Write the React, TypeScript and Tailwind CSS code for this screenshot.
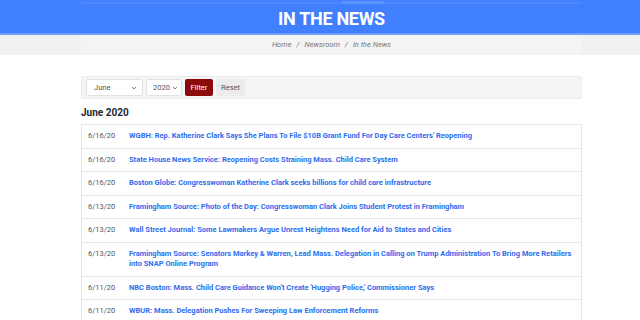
import React from 'react';

const news = [
  { date: '6/16/20', title: "WGBH: Rep. Katherine Clark Says She Plans To File $10B Grant Fund For Day Care Centers' Reopening" },
  { date: '6/16/20', title: 'State House News Service: Reopening Costs Straining Mass. Child Care System' },
  { date: '6/16/20', title: 'Boston Globe: Congresswoman Katherine Clark seeks billions for child care infrastructure' },
  { date: '6/13/20', title: 'Framingham Source: Photo of the Day: Congresswoman Clark Joins Student Protest in Framingham' },
  { date: '6/13/20', title: 'Wall Street Journal: Some Lawmakers Argue Unrest Heightens Need for Aid to States and Cities' },
  { date: '6/13/20', title: 'Framingham Source: Senators Markey & Warren, Lead Mass. Delegation in Calling on Trump Administration To Bring More Retailers into SNAP Online Program' },
  { date: '6/11/20', title: "NBC Boston: Mass. Child Care Guidance Won't Create 'Hugging Police,' Commissioner Says" },
  { date: '6/11/20', title: 'WBUR: Mass. Delegation Pushes For Sweeping Law Enforcement Reforms' },
];

const Chevron = () => (
  <svg width="6" height="6" viewBox="0 0 10 10" className="text-[#666]">
    <path d="M2 3.5 L5 6.5 L8 3.5" fill="none" stroke="currentColor" strokeWidth="1.6" />
  </svg>
);

const App = () => {
  return (
    <div className="w-[640px] h-[320px] overflow-hidden bg-white font-['Roboto',sans-serif]">
      {/* Banner */}
      <header className="bg-[#4080ff] border-b-2 border-[#6d9dff]">
        <div className="w-[501px] ml-[81px] h-[33px] relative">
          <div className="absolute top-[2px] left-0 right-0 h-[2px] bg-[#4d88ff]" />
          <div className="absolute top-[1px] left-[261px] w-[42px] h-[3px] bg-[#5e93ff]" />
          <h1 className="pt-[9px] text-center text-white font-bold text-[18px] leading-[20px] tracking-[-0.3px]">
            IN THE NEWS
          </h1>
        </div>
      </header>

      {/* Breadcrumb */}
      <div className="bg-[#f1f1f1]">
        <div className="w-[501px] ml-[81px] h-[20px] bg-[#f4f4f4] flex items-center justify-center text-[7.5px] italic text-[#777] gap-[5px]">
          <span>Home</span>
          <span>/</span>
          <span>Newsroom</span>
          <span>/</span>
          <span>In the News</span>
        </div>
      </div>

      <main className="w-[501px] ml-[81px] pt-[21px]">
        {/* Filter */}
        <div className="h-[23px] bg-[#f5f5f5] border border-[#ebebeb] rounded-[2px] flex items-center pl-[4px] gap-[3px]">
          <div className="w-[57px] h-[17px] bg-white border border-[#e2e2e2] rounded-[2px] flex items-center justify-between pl-[7px] pr-[5px] text-[7.5px] text-[#555]">
            <span>June</span>
            <Chevron />
          </div>
          <div className="w-[36px] h-[17px] bg-white border border-[#e2e2e2] rounded-[2px] flex items-center justify-between pl-[6px] pr-[3px] text-[7.5px] text-[#555]">
            <span>2020</span>
            <Chevron />
          </div>
          <button className="w-[28px] h-[17px] bg-[#8b0a0a] text-white text-[7.5px] rounded-[2px] flex items-center justify-center">
            Filter
          </button>
          <button className="w-[29px] h-[17px] bg-[#ececec] text-[#555] text-[7.5px] rounded-[2px] flex items-center justify-center">
            Reset
          </button>
        </div>

        <h2 className="mt-[8px] text-[10px] leading-[12px] font-bold text-[#1e2733]">June 2020</h2>

        {/* List */}
        <div className="mt-[5px] border border-[#e6e6e6]">
          {news.map((item, index) => (
            <div
              key={index}
              className={`flex py-[6px] text-[7.5px] leading-[10.5px] ${index > 0 ? 'border-t border-[#e6e6e6]' : ''}`}
            >
              <div className="w-[47px] shrink-0 pl-[6px] text-[#555]">{item.date}</div>
              <a href="#" className="flex-1 pr-[6px] font-bold text-[#2f6cf0]">
                {item.title}
              </a>
            </div>
          ))}
        </div>
      </main>
    </div>
  );
};

export default App;
